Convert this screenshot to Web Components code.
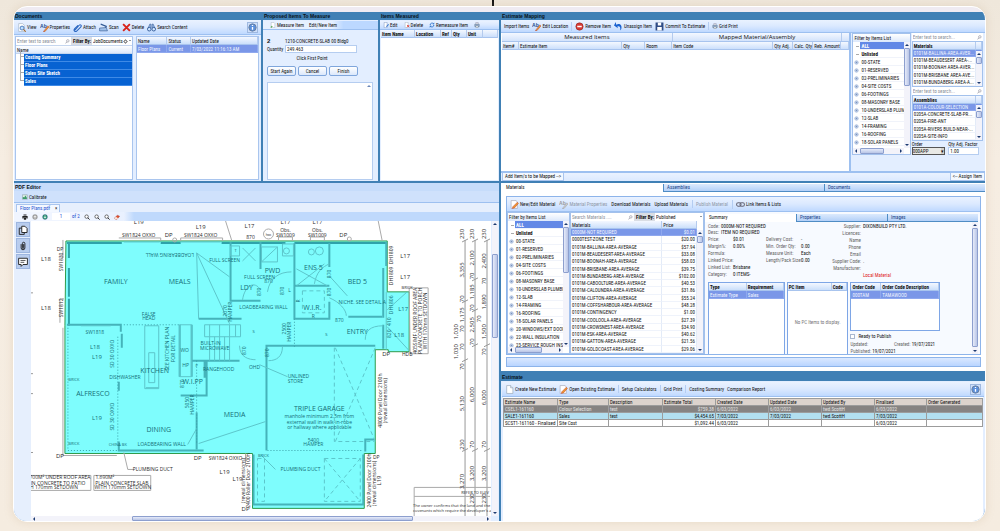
<!DOCTYPE html>
<html lang="en">
<head>
<meta charset="utf-8">
<title>Estimating workspace</title>
<style>
  body {
    margin: 0;
    height: 100vh;
    overflow: hidden;
    background: linear-gradient(#efe7db, #f6ede2 30%, #f5ece0);
    font: 5px/8px 'Liberation Sans Narrow', 'Roboto Condensed', Roboto, sans-serif;
    color: #111;
  }
</style>
</head>
<body>
<app-shell></app-shell>

<script>
const BASE = `
  *, *::before, *::after { box-sizing: border-box; }
  :host { display: block; min-width: 0; min-height: 0; box-sizing: border-box; }
  :host([hidden]) { display: none; }
  button, input, select { font: inherit; color: inherit; margin: 0; padding: 0; border: 0; background: none; border-radius: 0; min-width: 0; outline: 0; }
  button { cursor: pointer; }
`;

// ---------- icons ----------
const ICONS = {
  view: '<path d="M3 1h7l3 3v11H3z" fill="#fff" stroke="#9ab"/><circle cx="9" cy="9" r="3.5" fill="#bfe0ff" stroke="#3a6fb8" stroke-width="1.5"/><path d="M11.5 11.5l4 4" stroke="#a76b2c" stroke-width="2"/>',
  ab: '<text x="0" y="8" font-size="9" font-weight="bold" font-family="Liberation Sans" fill="#234b8c">Ab</text><path d="M7 14L14 5l2 2-7 8-3 1z" fill="#f0a030" stroke="#a33" stroke-width=".8"/>',
  abgray: '<text x="0" y="8" font-size="9" font-weight="bold" font-family="Liberation Sans" fill="#999">Ab</text><path d="M7 14L14 5l2 2-7 8-3 1z" fill="#ccc" stroke="#999" stroke-width=".8"/>',
  clip: '<path d="M3 13l8-9c2-2 5 0 3 3l-7 7c-3 3-7 0-4-4l6-6" fill="none" stroke="#2a66c0" stroke-width="1.8"/>',
  scan: '<path d="M3 2l10 4-3 6" fill="none" stroke="#345c96" stroke-width="2"/><path d="M1 9l12-1 2 6H1z" fill="#9fc0ea" stroke="#2d4f86"/>',
  del: '<path d="M2 2l12 12M14 2L2 14" stroke="#d8241c" stroke-width="3.4"/>',
  find: '<path d="M2 9l3-7h2v7M14 9l-3-7H9v7" fill="#9dbbe6" stroke="#27508f"/><circle cx="4" cy="11" r="3.2" fill="#cfe6ff" stroke="#27508f" stroke-width="1.5"/><circle cx="12" cy="11" r="3.2" fill="#cfe6ff" stroke="#27508f" stroke-width="1.5"/>',
  info: '<circle cx="8" cy="8" r="6.5" fill="#5b8fdc" stroke="#6b7f9c" stroke-width="1.6"/><path d="M8 7v5M8 3.5v2" stroke="#fff" stroke-width="2.4"/>',
  measure: '<path d="M3 1h7l3 3v11H3z" fill="#fff" stroke="#89a"/><path d="M1 14l4-4 2 2-3 3z" fill="#4aa34a"/>',
  editpage: '<path d="M3 1h8v14H3z" fill="#fff" stroke="#57a"/><path d="M8 12l6-7 2 2-6 6z" fill="#3a78d0"/>',
  delpage: '<path d="M3 1h8v14H3z" fill="#fff" stroke="#89a"/><path d="M8 8l6 6M14 8l-6 6" stroke="#e03020" stroke-width="2"/>',
  cycle: '<path d="M3 8a5 5 0 0 1 9-3M13 8a5 5 0 0 1-9 3" fill="none" stroke="#2a6fc8" stroke-width="2.4"/><path d="M9 6h5V1zM7 10H2v5z" fill="#2a6fc8"/>',
  print: '<path d="M5 1h6v5H5z" fill="#fff" stroke="#668"/><path d="M2 6h12v6H2z" fill="#9db4d8" stroke="#456"/><path d="M5 10h6v5H5z" fill="#fff" stroke="#456"/>',
  remove: '<circle cx="8" cy="8" r="6.5" fill="#d83a34" stroke="#8a2420"/><path d="M4 8h8" stroke="#fff" stroke-width="2.6"/>',
  undo: '<path d="M4 5c5-4 11 0 9 7-.6 2-2 3-2 3 1-6-1-8-5-7l1 3-7-5 3-6z" fill="#1a62d0"/>',
  save: '<path d="M1 1h14v14H1z" fill="#2f4c86"/><path d="M5 1h6v5H5zM4 9h8v6H4z" fill="#fff"/>',
  pencil: '<path d="M2 1h9l2 3v11H2z" fill="#fff" stroke="#99a"/><path d="M5 12l8-8 2 2-7 8-4 1z" fill="#ee9a30" stroke="#b33" stroke-width=".8"/>',
  blank: '<path d="M3 1h7l4 4v10H3z" fill="#fff" stroke="#89a"/><path d="M10 1v4h4" fill="#dde8f8" stroke="#89a"/>',
  link: '<rect x="1" y="5" width="8" height="6" rx="3" fill="none" stroke="#667" stroke-width="1.8"/><rect x="7" y="5" width="8" height="6" rx="3" fill="none" stroke="#667" stroke-width="1.8"/>',
  calibrate: '<path d="M1 2h13v12H1z" fill="#dff0e4" stroke="#678"/><path d="M2 13V7l4 2 3-5 4 6v3z" fill="#3f9a6a"/>',
  printer: '<path d="M4 1h8v3H4zM1 5h14v7h-3V9H4v3H1zM5 10h6v5H5z" fill="#222"/>',
  up: '<circle cx="8" cy="8" r="6.5" fill="#aaa" stroke="#777"/><path d="M8 12V5M5 8l3-3 3 3" fill="none" stroke="#fff" stroke-width="1.8"/>',
  down: '<circle cx="8" cy="8" r="6.5" fill="#2f9a74" stroke="#247"/><path d="M8 4v7M5 8l3 3 3-3" fill="none" stroke="#fff" stroke-width="1.8"/>',
  zoom: '<circle cx="7" cy="7" r="4.6" fill="#fff" stroke="#333" stroke-width="1.8"/><path d="M10 10l5 5" stroke="#333" stroke-width="2.6"/>',
  eraser: '<path d="M1 11l8-8 6 3-7 8H4z" fill="#e0502c" stroke="#933"/><path d="M1 11l4-4 6 4-3 3H4z" fill="#f7e6dc"/>',
  gear: '<circle cx="8" cy="8" r="4.4" fill="none" stroke="#444" stroke-width="2.4"/><path d="M8 1v14M1 8h14" stroke="#444" stroke-width="1.4"/><circle cx="8" cy="8" r="2.6" fill="#fff"/>',
  search: '<circle cx="9" cy="6" r="4" fill="none" stroke="#778" stroke-width="1.6"/><path d="M6 9l-4 5" stroke="#778" stroke-width="2"/>',
  pages: '<path d="M6 2h5l3.5 3.5V12H6z" fill="#fff" stroke="#222" stroke-width="1.5"/><path d="M6 5H2v10h8v-3" fill="none" stroke="#222" stroke-width="1.5"/>',
  attach: '<path d="M5 5v6a3 3 0 0 0 6 0V4a2 2 0 0 0-4 0v7a1 1 0 0 0 2 0V5" fill="none" stroke="#222" stroke-width="1.5"/>',
  note: '<path d="M1 2h14v10H8l-3 3v-3H1z" fill="#fff" stroke="#222" stroke-width="1.5"/><path d="M4 5.500h8M4 8.500h6" stroke="#222" stroke-width="1.2"/>',
  node: '<circle cx="8" cy="8" r="5.500" fill="#dbe7f9" stroke="#8aa2cc" stroke-width="2"/><path d="M5 8h6M8 5v6" stroke="#5b76a6" stroke-width="1.6"/>'
};

class UiIcon extends HTMLElement {
  connectedCallback() {
    this.attachShadow({ mode: 'open' });
    this.shadowRoot.innerHTML = `
      <style>
        :host { display: inline-block; flex: none; width: var(--icon, 9px); height: var(--icon, 9px); }
        svg { display: block; width: 100%; height: 100%; }
      </style>
      <svg viewBox="0 0 16 16" aria-hidden="true">${ICONS[this.getAttribute('name')] || ''}</svg>`;
  }
}

// ---------- toolbar ----------
class ToolBar extends HTMLElement {
  connectedCallback() {
    this.attachShadow({ mode: 'open' });
    this.shadowRoot.innerHTML = `
      <style>${BASE}
        :host {
          display: flex; align-items: center; flex: none; gap: 3px;
          height: 15px; padding: 0 3px; white-space: nowrap;
          background: linear-gradient(#eaf2ff, #dbe9ff 50%, #bfd9ff);
          border-bottom: 1px solid #9dc0f0;
        }
      </style>
      <slot></slot>`;
  }
}

class ToolItem extends HTMLElement {
  connectedCallback() {
    const icon = this.getAttribute('icon');
    this.attachShadow({ mode: 'open' });
    this.shadowRoot.innerHTML = `
      <style>${BASE}
        :host { display: block; flex: none; }
        :host([push]) { margin-left: auto; }
        :host([off]) { color: #8f98a8; }
        :host([split]) { border-left: 1px solid #b4cdf2; padding-left: 3px; }
        button { display: flex; align-items: center; gap: 1px; white-space: nowrap; line-height: 8px; }
        :host([boxed]) button { border: 1px solid #9fb9e0; background: #cfdffa; }
      </style>
      <button type="button" ${icon && !this.textContent ? `aria-label="${icon}"` : ''}>${icon ? `<ui-icon name="${icon}"></ui-icon>` : ''}<slot></slot></button>`;
  }
}

// ---------- pane ----------
class AppPane extends HTMLElement {
  connectedCallback() {
    this.attachShadow({ mode: 'open' });
    this.shadowRoot.innerHTML = `
      <style>${BASE}
        :host { display: flex; flex-direction: column; overflow: hidden; background: #e3eeff; }
        h2 {
          flex: none; margin: 0; height: 8px; padding-left: 1px;
          font: bold 5px/8px 'Liberation Sans', sans-serif;
          background: var(--bar, #4080b5); color: #061018; white-space: nowrap;
        }
      </style>
      <h2>${this.getAttribute('label')}</h2>
      <slot></slot>`;
  }
}

// ---------- scroll bars ----------
class ScrollTrack extends HTMLElement {
  connectedCallback() {
    this.attachShadow({ mode: 'open' });
    this.shadowRoot.innerHTML = `
      <style>${BASE}
        :host { display: flex; flex: none; flex-direction: column; width: 6px; background: #f3f3fa; }
        :host([across]) { flex-direction: row; width: auto; height: 6px; }
        i { flex: none; width: 6px; height: 6px; display: grid; place-items: center; }
        i::before { content: ''; border: 2px solid transparent; border-bottom-color: #1c3a70; border-top-width: 0; }
        i:last-child::before { transform: rotate(180deg); }
        :host([across]) i::before { transform: rotate(-90deg); }
        :host([across]) i:last-child::before { transform: rotate(90deg); }
        .lead { flex: var(--lead, 0) 0 0; }
        .rest { flex: var(--rest, 1) 0 0; }
        .thumb {
          flex: var(--thumb, 1) 0 0; border: 1px solid #8d9fce; border-radius: 1px;
          background: linear-gradient(90deg, #e6ebfa, #b9c5e6);
        }
        :host([across]) .thumb { background: linear-gradient(#e6ebfa, #b9c5e6); }
      </style>
      <i></i><span class="lead"></span><span class="thumb"></span><span class="rest"></span><i></i>`;
  }
}

// ---------- search row ----------
class SearchBox extends HTMLElement {
  connectedCallback() {
    this.attachShadow({ mode: 'open' });
    this.shadowRoot.innerHTML = `
      <style>${BASE}
        :host { display: flex; align-items: center; flex: none; height: 8px; background: #fff; --icon: 5px; padding-right: 1px; }
        input { flex: 1; height: 7px; padding-left: 1px; }
        input::placeholder { color: #8a8f99; opacity: 1; }
      </style>
      <input type="search" aria-label="Search" placeholder="${this.getAttribute('hint') || 'Enter text to search...'}">
      <ui-icon name="search"></ui-icon>`;
  }
}

class FilterSelect extends HTMLElement {
  connectedCallback() {
    this.attachShadow({ mode: 'open' });
    this.shadowRoot.innerHTML = `
      <style>${BASE}
        :host { display: flex; align-items: center; flex: none; height: 8px; background: #fff; }
        label { background: #d9dde4; padding: 0 1px 0 2px; font-weight: bold; white-space: nowrap; }
        select { flex: 1; appearance: none; height: 8px; padding-left: 1px; }
        span { border: 1px solid transparent; border-top-color: #234; margin: 0 1px; }
      </style>
      <label for="f">Filter By:</label>
      <select id="f"><option>${this.getAttribute('value')}</option></select><slot></slot><span></span>`;
  }
}

// ---------- category tree ----------
const CATEGORIES = ['00-STATE', '01-RESERVED', '02-PRELIMINARIES', '04-SITE COSTS', '06-FOOTINGS', '08-MASONRY BASE',
  '10-UNDERSLAB PLUMBIN', '12-SLAB', '14-FRAMING', '16-ROOFING', '18-SOLAR PANELS', '20-WINDOWS/EXT DOOR',
  '22-WALL INSULATION', '23-SERVICE ROUGH INS'];

class CategoryTree extends HTMLElement {
  connectedCallback() {
    const items = CATEGORIES.slice(0, this.getAttribute('count') || CATEGORIES.length);
    this.attachShadow({ mode: 'open' });
    this.shadowRoot.innerHTML = `
      <style>${BASE}
        :host { display: flex; flex-direction: column; border: 1px solid #a3c1ec; background: #fff; --icon: 5px; overflow: hidden; }
        h3 { flex: none; margin: 0; font: inherit; height: 8px; padding-left: 1px; background: linear-gradient(#fff, #dce8fb); white-space: nowrap; }
        .body { flex: 1; display: flex; min-height: 0; }
        ul { flex: 1; min-width: 0; margin: 0; padding: 0; list-style: none; overflow: hidden; }
        li { display: flex; align-items: center; gap: 1px; height: 8px; padding-left: 1px; white-space: nowrap; }
        li span { flex: 1; padding-left: 1px; overflow: hidden; border-bottom: 1px solid #f0f3fa; height: 8px; }
        li.top::before { content: ''; width: 5px; height: 1px; background: linear-gradient(90deg, transparent 50%, #aaa 50%); }
        li.top { font-weight: bold; }
        li.on span { background: #6288e6; color: #fff; }
        .v { --lead: 0; --thumb: 36; --rest: 55; }
        .h { --lead: 1; --thumb: 28; --rest: 17; margin-right: 6px; }
      </style>
      <h3>Filter by Items List</h3>
      <div class="body">
        <ul>
          <li class="top on"><span>ALL</span></li>
          <li class="top"><span>Unlisted</span></li>
          ${items.map(c => `<li><ui-icon name="node"></ui-icon><span>${c}</span></li>`).join('')}
        </ul>
        <scroll-track class="v"></scroll-track>
      </div>
      <scroll-track class="h" across></scroll-track>`;
  }
}

// ---------- grids ----------
// cols: [label, share of the width, alignment]
const AVG = '-AREA-AVERAGE';
const GRIDS = {
  files: { cols: [['Name', 31], ['Status', 24], ['Updated Date', 68]],
    rows: [['Floor Plans', 'Current', '7/03/2022 11:16:13 AM']], on: 0 },
  measured: { bold: true, cols: [['Item Name', 34], ['Location', 26], ['Ref', 11], ['Qty', 15], ['Unit', 16], ['', 15]], rows: [] },
  mapping: { cols: [['Item#', 17], ['Estimate Item', 103], ['Qty', 23], ['Room', 27], ['Item Code', 101], ['Qty Adj.', 20], ['Calc. Qty', 20], ['Reb. Amount', 28], ['', 8]], rows: [] },
  pickMaterials: { bold: true, cols: [['Materials', 64], ['', 6]],
    rows: ['0101M-BALLINA-AREA-AVER...', '0101M-BEAUDESERT AREA-...', '0101M-BOONAH AREA-AVER...', '0101M-BRISBANE AREA-AVE...', '0101M-BUNDABERG AREA-A...'].map(t => [t]), on: 0 },
  pickAssemblies: { bold: true, cols: [['Assemblies', 64], ['', 6]],
    rows: ['0101A-COLOUR-SELECTION', '0205A-CONCRETE-SLAB-PR...', '0205A-FIRE-ANT', '0205A-RIVERS BUILD-NEAR-...', '0205A-SITE-INFO'].map(t => [t]), on: 0 },
  materials: { cols: [['Materials', 92], ['Price', 35, 'end']], on: 0, rows: [
    ['0000M-NOT REQUIRED', '$0.01'], ['0000TEST-ZONE TEST', '$20.00'], ['0101M-BALLINA' + AVG, '$57.94'],
    ['0101M-BEAUDESERT' + AVG, '$33.08'], ['0101M-BOONAH' + AVG, '$58.03'], ['0101M-BRISBANE' + AVG, '$39.75'],
    ['0101M-BUNDABERG' + AVG, '$102.00'], ['0101M-CABOOLTURE' + AVG, '$40.53'], ['0101M-CALOUNDRA' + AVG, '$31.86'],
    ['0101M-CLIFTON' + AVG, '$55.24'], ['0101M-COFFSHARBOUR' + AVG, '$48.28'], ['0101M-CONTINGENCY', '$1.00'],
    ['0101M-COOLOOLA' + AVG, '$27.39'], ['0101M-CROWSNEST' + AVG, '$34.90'], ['0101M-ESK' + AVG, '$40.62'],
    ['0101M-GATTON' + AVG, '$21.56'], ['0101M-GOLDCOAST' + AVG, '$29.06']] },
  types: { bold: true, cols: [['Type', 39], ['Requirement', 38]], rows: [['Estimate Type', 'Sales']], on: 0 },
  pcItems: { bold: true, cols: [['PC Item', 45], ['Code', 16]], rows: [] },
  orders: { bold: true, cols: [['Order Code', 30], ['Order Code Description', 58]], rows: [['000TAM', 'TAMAWOOD']], on: 0 },
  estimates: { classic: true,
    cols: [['Estimate Name', 54], ['Type', 51], ['Description', 54], ['Estimate Total', 53, 'end'], ['Created Date', 53], ['Updated Date', 53], ['Updated By', 53], ['Finalised', 52], ['Order Generated', 56]],
    rows: [['CSEL1-161160', 'Colour Selection', 'test', '$759.38', '6/03/2022', '6/03/2022', 'twd.ScottH', '6/03/2022', ''],
      ['SALE1-161160', 'Sales', 'test', '$4,454.65', '7/03/2022', '7/03/2022', 'twd.ScottH', '7/03/2022', ''],
      ['SCST1-161160 - Finalised', 'Site Cost', '', '$1,092.44', '6/03/2022', '', '', '6/03/2022', '']] }
};

class DataGrid extends HTMLElement {
  connectedCallback() {
    const g = GRIDS[this.getAttribute('source')];
    const total = g.cols.reduce((n, c) => n + c[1], 0);
    this.attachShadow({ mode: 'open' });
    this.shadowRoot.innerHTML = `
      <style>${BASE}
        :host { background: #fff; overflow: hidden; }
        table { width: 100%; height: var(--table, auto); border-spacing: 0; table-layout: fixed; }
        th, td { height: var(--row, 8px); padding: 0 0 0 1px; line-height: 6px; text-align: start; font-weight: normal; white-space: nowrap; overflow: hidden; border-right: 1px solid #e3ebf8; }
        td { border-bottom: 1px solid #eff3fb; }
        th { height: 8px; border-right-color: #b4cbee; border-bottom: 1px solid #a8c4ee; background: linear-gradient(#f4f8ff, #cbdffb); }
        .bold th { font-weight: bold; }
        td.end { text-align: end; padding-right: 1px; }
        tr.on td { background: #7a97e8; color: #f2f6ff; border-color: #8fa8ee; }
        .classic { border-collapse: collapse; }
        .classic th, .classic td { border: 1px solid #9c9c9c; height: 7px; line-height: 6px; }
        .classic th { background: #dcd3cd; }
        .classic tbody tr:nth-child(1) td { background: #868382; color: #e4e4e4; }
        .classic tbody tr:nth-child(2) td { background: #b2dff0; }
      </style>
      <table class="${g.bold ? 'bold' : ''} ${g.classic ? 'classic' : ''}">
        <colgroup>${g.cols.map(c => `<col style="width:${(c[1] / total * 100).toFixed(2)}%">`).join('')}</colgroup>
        <thead><tr>${g.cols.map(c => `<th scope="col">${c[0]}</th>`).join('')}</tr></thead>
        <tbody>${g.rows.map((r, i) => `<tr${g.on === i ? ' class="on"' : ''}>${g.cols.map((c, j) => `<td class="${c[2] || ''}">${r[j] || ''}</td>`).join('')}</tr>`).join('')}</tbody>
      </table>
      <slot></slot>`;
  }
}

// ---------- documents ----------
class DocumentsPane extends HTMLElement {
  connectedCallback() {
    this.attachShadow({ mode: 'open' });
    this.shadowRoot.innerHTML = `
      <style>${BASE}
        :host { display: grid; }
        .cols { flex: 1; display: grid; grid-template-columns: 118fr 123fr; gap: 3px; padding: 1px 2px 1px 1px; min-height: 0; }
        .left, .right { border: 1px solid #a9c5ee; background: #fff; overflow: hidden; }
        .row { display: grid; grid-template-columns: 55fr 61fr; border-bottom: 1px solid #c5d6ef; }
        h3 { margin: 0; font: inherit; height: 8px; padding-left: 1px; background: linear-gradient(#fff, #dce8fb); border-bottom: 1px solid #c5d6ef; }
        ul { list-style: none; margin: 0 0 0 8px; padding: 0; font-weight: bold; }
        li { position: relative; height: 8px; padding-left: 1px; background: #0762d2; color: #fff; border-bottom: 1px solid #3f8ae6; line-height: 7px; }
        li::before { content: ''; position: absolute; left: -4px; bottom: 4px; width: 4px; height: 8px; border: solid #aaa; border-width: 0 0 1px 1px; }
      </style>
      <app-pane label="Documents">
        <tool-bar>
          <tool-item icon="view">View</tool-item>
          <tool-item icon="ab">Properties</tool-item>
          <tool-item icon="clip">Attach</tool-item>
          <tool-item icon="scan">Scan</tool-item>
          <tool-item icon="del">Delete</tool-item>
          <tool-item icon="find">Search Content</tool-item>
          <tool-item icon="info" push boxed></tool-item>
        </tool-bar>
        <div class="cols">
          <div class="left">
            <div class="row"><search-box></search-box><filter-select value="JobDocuments"><ui-icon name="gear" style="--icon:5px"></ui-icon></filter-select></div>
            <h3>Name</h3>
            <ul><li>Costing Summary</li><li>Floor Plans</li><li>Sales Site Sketch</li><li>Sales</li></ul>
          </div>
          <data-grid class="right" source="files"></data-grid>
        </div>
      </app-pane>`;
  }
}

// ---------- proposed items ----------
class ProposedPane extends HTMLElement {
  connectedCallback() {
    this.attachShadow({ mode: 'open' });
    this.shadowRoot.innerHTML = `
      <style>${BASE}
        :host { display: grid; }
        tool-bar { height: 9px; background: linear-gradient(90deg, #e6f0ff 60%, #bcd8ff 70%); --icon: 6px; margin-top: 1px; padding-left: 7px; gap: 5px; }
        form { flex: 1; display: flex; flex-direction: column; padding: 7px 4px 1px 4px; min-height: 0; }
        .fields { display: grid; grid-template-columns: 18px 72px; line-height: 8px; }
        b { font: bold 6px/8px 'Liberation Sans', sans-serif; }
        input { height: 8px; border: 1px solid #b5cdf0; background: #fff; padding-left: 1px; }
        p { margin: 1px 0 4px; width: 90px; text-align: center; }
        .buttons { display: grid; grid-template-columns: repeat(3, 29px); gap: 2px; }
        .buttons button { height: 10px; border: 1px solid #7fa6dc; border-radius: 2px; background: linear-gradient(#fff, #dbe8fb); }
        .log { flex: 1; display: flex; justify-content: end; margin: 6px 1px 0 0; border: 1px solid #b5cdf0; background: #fff; }
        .log i { width: 6px; height: 6px; display: grid; place-items: center; }
        .log i::before { content: ''; border: 2px solid transparent; border-bottom-color: #6b86b8; border-top-width: 0; }
      </style>
      <app-pane label="Proposed Items To Measure">
        <tool-bar>
          <tool-item icon="measure">Measure Item</tool-item>
          <tool-item>Edit/New Item</tool-item>
        </tool-bar>
        <form>
          <div class="fields">
            <b>2</b><span>1210-CONCRETE-SLAB 00 Bldg0</span>
            <label for="qty">Quantity</label><input id="qty" value="249.463">
          </div>
          <p>Click First Point</p>
          <div class="buttons"><button type="button">Start Again</button><button type="button">Cancel</button><button type="button">Finish</button></div>
          <div class="log"><i></i></div>
        </form>
      </app-pane>`;
  }
}

class MeasuredPane extends HTMLElement {
  connectedCallback() {
    this.attachShadow({ mode: 'open' });
    this.shadowRoot.innerHTML = `
      <style>${BASE}
        :host { display: grid; }
        tool-bar { height: 9px; --icon: 6px; margin-top: 1px; gap: 6px; }
        data-grid { flex: 1; margin: 0 1px 1px; }
      </style>
      <app-pane label="Items Measured">
        <tool-bar>
          <tool-item icon="editpage">Edit</tool-item>
          <tool-item icon="delpage">Delete</tool-item>
          <tool-item icon="cycle">Remeasure Item</tool-item>
          <tool-item icon="print"></tool-item>
        </tool-bar>
        <data-grid source="measured"></data-grid>
      </app-pane>`;
  }
}

// ---------- estimate mapping ----------
class MappingPane extends HTMLElement {
  connectedCallback() {
    this.attachShadow({ mode: 'open' });
    this.shadowRoot.innerHTML = `
      <style>${BASE}
        :host { display: grid; }
        tool-bar { height: 13px; gap: 3px; }
        .cols { flex: 1; display: grid; grid-template-columns: 350fr 58fr 72fr; padding-right: 2px; min-height: 0; }
        .cols > * { overflow: hidden; }
        .table { display: flex; flex-direction: column; background: #fff; border-right: 2px solid #9dc0f0; margin-right: 1px; padding-left: 1px; }
        .groups { flex: none; display: grid; grid-template-columns: 170fr 170fr 8fr; font: 6px/8px 'Open Sans', sans-serif; text-align: center; border-bottom: 1px solid #a8c4ee; background: linear-gradient(#f4f8ff, #d3e3fb); }
        .groups span + span { border-left: 1px solid #b4cbee; }
        data-grid { flex: none; }
        category-tree { margin: 0 0 16px; }
        .picks { padding-left: 1px; display: flex; flex-direction: column; }
        .pick { flex: none; display: grid; grid-template: 100% / 1fr 6px; height: 46px; border: 1px solid #a3c1ec; background: #fff; }
        .pick data-grid { grid-column: 1 / 3; grid-row: 1; --table: 100%; --row: 7px; }
        .pick scroll-track { grid-column: 2; grid-row: 1; margin-top: 9px; --thumb: 6; --rest: 19; }
        .order { display: grid; grid-template-columns: 34fr 31fr; gap: 0 3px; line-height: 6px; margin-right: 4px; }
        label { white-space: nowrap; }
        select { appearance: none; width: 100%; height: 8px; border: 1px solid #555; background: #e9e9e6; line-height: 6px; }
        .combo { display: block; position: relative; }
        .combo::after { content: '\\25BE'; position: absolute; right: 1px; top: 1px; background: #d4d0c8; }
        .order input { height: 8px; background: #fff; border: 1px solid #b5cdf0; padding-left: 1px; }
        footer { flex: none; display: flex; justify-content: space-between; height: 10px; border-top: 2px solid #9dc0f0; background: linear-gradient(#eaf2ff, #dbe9ff); padding-left: 1px; }
        footer button { padding: 0 2px; border: 1px solid #a9c5ee; border-top: 0; background: #f3f8ff; line-height: 7px; }
      </style>
      <app-pane label="Estimate Mapping">
        <tool-bar>
          <tool-item>Import Items</tool-item>
          <tool-item icon="ab">Edit Location</tool-item>
          <tool-item icon="remove" split>Remove Item</tool-item>
          <tool-item icon="undo">Unassign Item</tool-item>
          <tool-item icon="save">Commit To Estimate</tool-item>
          <tool-item icon="print" split style="--icon:6px">Grid Print</tool-item>
        </tool-bar>
        <div class="cols">
          <div class="table">
            <div class="groups"><span>Measured Items</span><span>Mapped Material/Assembly</span><span></span></div>
            <data-grid source="mapping"></data-grid>
          </div>
          <category-tree count="11"></category-tree>
          <div class="picks">
            <search-box></search-box>
            <div class="pick"><data-grid source="pickMaterials"></data-grid><scroll-track></scroll-track></div>
            <search-box></search-box>
            <div class="pick"><data-grid source="pickAssemblies"></data-grid><scroll-track></scroll-track></div>
            <div class="order">
              <label for="order">Order</label><label for="factor">Qty Adj. Factor</label>
              <span class="combo"><select id="order"><option>000APP</option></select></span><input id="factor" value="1.00">
            </div>
          </div>
        </div>
        <footer><button type="button">Add Item/s to be Mapped --&gt;</button><button type="button">&lt;-- Assign Item</button></footer>
      </app-pane>`;
  }
}

// ---------- tab strip ----------
class TabStrip extends HTMLElement {
  connectedCallback() {
    this.attachShadow({ mode: 'open' });
    this.shadowRoot.innerHTML = `
      <style>${BASE}
        :host { display: grid; flex: none; grid-auto-flow: column; grid-auto-columns: 1fr; height: 8px; }
        button { text-align: start; padding-left: 3px; line-height: 7px; color: #173f86; background: linear-gradient(#dceafd, #b3d0f8); border: 1px solid #4f8cc4; border-width: 0 0 1px 1px; }
        button:first-of-type { background: #fff; color: #111; border-color: #fff; }
      </style>
      ${this.getAttribute('tabs').split(',').map(t => `<button type="button" role="tab">${t}</button>`).join('')}`;
  }
}

// ---------- material detail ----------
class MaterialDetail extends HTMLElement {
  connectedCallback() {
    this.attachShadow({ mode: 'open' });
    this.shadowRoot.innerHTML = `
      <style>${BASE}
        :host { display: flex; flex-direction: column; background: #f7faff; border-left: 1px solid #a3c1ec; padding-top: 2px; overflow: hidden; }
        tab-strip { margin-right: 2px; }
        .body { flex: 1; display: flex; min-height: 0; }
        .page { flex: 1; padding: 1px 4px 0 3px; overflow: hidden; }
        .facts { display: grid; grid-template-columns: 59fr 76fr 129fr; height: 59px; }
        dl { margin: 0; display: grid; grid-template-columns: 25px 1fr; grid-auto-rows: 7px; line-height: 7px; align-content: start; white-space: nowrap; }
        dt { color: #666; }
        dd { margin: 0; }
        .tight { grid-template-columns: 13px 1fr; grid-auto-rows: 6px; margin-bottom: 1px; }
        .mid { grid-template-columns: 35px 1fr; padding-top: 13px; }
        .far { grid-template-columns: 20px 1fr; column-gap: 2px; }
        .far dt { text-align: end; justify-self: end; }
        .red { color: #e0201c; }
        .tables { display: grid; grid-template-columns: 77fr 62fr 90fr 26fr; gap: 2px; height: 74px; }
        .tables data-grid { border: 1px solid #7ea6e6; }
        .pc { text-align: center; color: #777; }
        .pc p { margin: 27px 0 0; }
        .tables .ord { height: 49px; }
        .foot label { display: flex; align-items: center; gap: 3px; height: 10px; }
        .foot input { appearance: none; width: 5px; height: 5px; border: 1px solid #a9b8d0; background: #fff; }
        .meta { display: flex; justify-content: space-between; line-height: 7px; color: #666; padding-right: 5px; }
        .meta b { font-weight: normal; color: #111; }
        scroll-track { --thumb: 120; --rest: 1; margin-right: 2px; }
      </style>
      <tab-strip tabs="Summary,Properties,Images"></tab-strip>
      <div class="body">
        <div class="page">
          <div class="facts">
            <div>
              <dl class="tight"><dt>Code:</dt><dd>0000M-NOT REQUIRED</dd><dt>Desc:</dt><dd>ITEM NO REQUIRED</dd></dl>
              <dl><dt>Price:</dt><dd>$0.01</dd><dt>Margin%:</dt><dd>0.00%</dd><dt>Formula:</dt><dd></dd><dt>Linked Price:</dt><dd></dd><dt>Linked List:</dt><dd>Brisbane</dd><dt>Category:</dt><dd>0 ITEMS-</dd></dl>
            </div>
            <dl class="mid"><dt>Delivery Cost:</dt><dd>-</dd><dt>Min. Order Qty:</dt><dd>0.00</dd><dt>Measure Unit:</dt><dd>Each</dd><dt>Length/Pack Size:</dt><dd>0.00</dd></dl>
            <dl class="far"><dt>Supplier:</dt><dd>DIXONBUILD PTY LTD.</dd><dt>Licences:</dt><dd></dd><dt>Name</dt><dd></dd><dt>Phone</dt><dd></dd><dt>Email</dt><dd></dd><dt>Supplier Code:</dt><dd>.</dd><dt>Manufacturer:</dt><dd></dd><dt></dt><dd class="red">Local Material</dd></dl>
          </div>
          <div class="tables">
            <data-grid source="types"></data-grid>
            <data-grid source="pcItems"><div class="pc"><p>No PC Items to display.</p></div></data-grid>
            <div>
              <data-grid class="ord" source="orders"></data-grid>
              <div class="foot">
                <label><input type="checkbox">Ready to Publish</label>
                <div class="meta"><span>Updated:</span><span>Created: <b>19/07/2021</b></span></div>
                <div class="meta"><span>Published: <b>19/07/2021</b></span></div>
              </div>
            </div>
          </div>
        </div>
        <scroll-track></scroll-track>
      </div>`;
  }
}

class MaterialsPane extends HTMLElement {
  connectedCallback() {
    this.attachShadow({ mode: 'open' });
    this.shadowRoot.innerHTML = `
      <style>${BASE}
        :host { display: flex; flex-direction: column; background: #fff; padding: 1px 0 4px 1px; overflow: hidden; }
        .frame { flex: 1; display: flex; flex-direction: column; margin: 4px 4px 2px; border: 1px solid #8db4ea; min-height: 0; }
        .cols { flex: 1; display: grid; grid-template: 100% / 63fr 134fr 276fr; min-height: 0; }
        .cols > * { min-height: 0; }
        .list { display: flex; flex-direction: column; border: 1px solid #a3c1ec; background: #fff; overflow: hidden; }
        .row { flex: none; display: grid; grid-template-columns: 64fr 70fr; }
        .body { flex: 1; display: flex; min-height: 0; }
        .body data-grid { flex: 1; --table: 100%; --row: 7px; }
        .body scroll-track { margin-top: 9px; --thumb: 5; --rest: 105; }
        .strip { flex: none; height: 10px; margin: 0 4px; border: 1px solid #8db4ea; background: linear-gradient(#dbe9ff, #b9d5ff); }
        tool-bar { gap: 4px; }
      </style>
      <tab-strip tabs="Materials,Assemblies,Documents"></tab-strip>
      <div class="frame">
        <tool-bar>
          <tool-item icon="pencil">New/Edit Material</tool-item>
          <tool-item icon="abgray" off>Material Properties</tool-item>
          <tool-item>Download Materials</tool-item>
          <tool-item>Upload Materials</tool-item>
          <tool-item off split>Publish Material</tool-item>
          <tool-item icon="link" split>Link Items &amp; Lists</tool-item>
        </tool-bar>
        <div class="cols">
          <category-tree></category-tree>
          <div class="list">
            <div class="row"><search-box hint="Search Materials ...."></search-box><filter-select value="Published"></filter-select></div>
            <div class="body"><data-grid source="materials"></data-grid><scroll-track></scroll-track></div>
          </div>
          <material-detail></material-detail>
        </div>
      </div>
      <div class="strip"></div>`;
  }
}

class EstimatePane extends HTMLElement {
  connectedCallback() {
    this.attachShadow({ mode: 'open' });
    this.shadowRoot.innerHTML = `
      <style>${BASE}
        :host { display: grid; }
        tool-bar { margin: 1px 1px 0; gap: 3px; }
        .area { flex: 1; margin: 0 2px; padding-top: 1px; background: #fff; }
      </style>
      <app-pane label="Estimate">
        <tool-bar>
          <tool-item icon="blank">Create New Estimate</tool-item>
          <tool-item icon="pencil">Open Existing Estimate</tool-item>
          <tool-item split>Setup Calculators</tool-item>
          <tool-item split>Grid Print</tool-item>
          <tool-item split>Costing Summary</tool-item>
          <tool-item>Comparison Report</tool-item>
          <tool-item icon="info" push boxed></tool-item>
        </tool-bar>
        <div class="area"><data-grid source="estimates"></data-grid></div>
      </app-pane>`;
  }
}

// ---------- floor plan ----------
// labels: [text, centre x, baseline y, size, turn]
const ROOMS = [
  ['FAMILY', 116, 284, 7], ['MEALS', 180, 284, 7], ['KITCHEN', 155, 373, 7], ['ALFRESCO', 93, 396, 7],
  ['DINING', 159, 432, 7], ['MEDIA', 235, 417, 7], ['ENTRY', 358, 334, 7], ['BED 5', 358, 284, 7],
  ['ENS 5', 314, 270, 7], ['PWD', 273, 273, 7], ['LDY', 247, 290, 7], ['W.I.R.', 313, 310, 7],
  ['W.I.PP', 193, 384, 7], ['TRIPLE GARAGE', 320, 411, 7],
  ['manhole minimum 2.5m from', 320, 418, 5], ['external wall in walk-in-robe', 320, 424, 5], ['or hallway where applicable', 320, 429, 5],
  ['LOADBEARING WALL', 264, 309, 5], ['LOADBEARING WALL', 170, 253, 5, 180], ['LOADBEARING WALL', 162, 447, 5],
  ['FULL SCREEN', 225, 262, 5], ['FULL SCREEN', 260, 279, 5], ['BUILT-IN', 211, 345, 5], ['MICROWAVE', 215, 350, 5],
  ['RANGEHOOD', 219, 371, 5], ['DISHWASHER', 125, 379, 5], ['UNLINED', 299, 378, 5], ['STORE', 296, 383, 5],
  ['5400', 314, 442, 5], ['HAMPER', 314, 447, 5], ['PLUMBING DUCT', 301, 472, 5], ['NICHE. SEE DETAIL A', 363, 304, 5],
  ['SW1818', 95, 334, 5], ['L18', 95, 349, 6], ['L19', 97, 359, 6], ['L19', 97, 420, 6], ['FALSE', 149, 316, 5], ['HEAD', 149, 320, 5],
  ['WO', 185, 352, 5], ['HP', 186, 367, 5], ['P', 197, 367, 4], ['T', 236, 252, 4], ['L17', 404, 311, 6], ['L18', 400, 337, 6],
  ['BRICK', 74, 381, 4], ['BRICK', 74, 445, 4], ['CHINA BK', 118, 446, 4], ['BRICK', 264, 458, 4],
  ['870', 269, 283, 5], ['870', 340, 322, 5], ['870', 262, 292, 5, -90], ['870', 332, 274, 5, -90], ['870', 332, 292, 5, -90],
  ['870', 270, 353, 5, -90], ['870', 184, 384, 5, -90], ['870', 285, 291, 5, -90], ['R', 314, 318, 5], ['R', 301, 301, 5, -90],
  ['2500', 287, 329, 5, -90], ['HAMPER', 292, 332, 5, -90], ['2070', 227, 311, 5, -90], ['HAMPER', 232, 312, 5, -90],
  ['5050', 189, 403, 5, -90], ['HAMPER', 194, 405, 5, -90], ['SD 30 OXXO', 114, 354, 5, -90], ['SD 30 OXXO', 114, 417, 5, -90],
  ['SEE KITCHEN PLAN', 169, 349, 5, -90], ['FOR DETAIL', 175, 349, 5, -90], ['DH1806', 394, 305, 5, -90],
  ['820', 392, 334, 5, -90], ['410', 392, 322, 5, -90], ['870', 246, 351, 5, -90], ['OHD', 255, 369, 5], ['L', 290, 292, 5], ['S', 327, 336, 4], ['S', 254, 333, 4]
];
const OUTSIDE = [
  ['L18', 46, 261, 6], ['L18', 46, 310, 6], ['L19', 139, 224, 6], ['SW1824 OXXO', 139, 237, 5], ['DP', 169, 237, 6], ['SW1824 OXXO', 201, 237, 5],
  ['L19', 201, 229, 6], ['L17', 250, 228, 6], ['870', 251, 239, 5], ['L17', 286, 224, 6], ['L17', 318, 224, 6],
  ['Obs.', 286, 232, 5], ['SW1009', 286, 237, 5], ['Obs.', 318, 232, 5], ['SW1009', 318, 237, 5], ['DP', 344, 237, 6], ['hws', 269, 236, 3],
  ['L17', 406, 258, 6], ['L17', 406, 279, 6], ['DH1809', 394, 255, 5, -90], ['DH1809', 394, 276, 5, -90],
  ['SW1830', 63, 262, 5, -90], ['SW1812', 63, 308, 5, -90], ['DP', 60, 251, 5], ['DP', 60, 459, 6], ['DP', 198, 461, 6],
  ['SW1824 OXXO', 226, 461, 5], ['L19', 225, 475, 6], ['L19', 238, 482, 6], ['PLUMBING DUCT', 153, 472, 5],
  ['DP', 387, 356, 6], ['HDB', 408, 356, 5], ['BRICK', 408, 289, 4], ['DP', 246, 512, 6], ['DP', 377, 460, 5], ['L19', 382, 481, 6, -90],
  ['405SIMF UNDER ROOF AREA', 418, 321, 5, -90], ['PLAIN CONCRETE TO PORCH', 423, 321, 5, -90], ['WITH 170mm SETDOWN', 428, 321, 5, -90],
  ['4800 Panel Door 2100h', 383, 401, 5, -90], ['(reveal dimensions)', 388, 401, 5, -90],
  ['2400 Panel Door 2100h', 372, 481, 5, -90], ['(reveal dimensions)', 377, 484, 5, -90],
  ['2400 Roller Door 2100h', 250, 481, 5, -90], ['(reveal dimensions)', 245, 481, 5, -90],
  ['700M² UNDER ROOF AREA', 60, 480, 5], ['IN CONCRETE TO PATIO', 58, 486, 5], ['H 170mm SETDOWN', 54, 490, 5],
  ['1.690M²', 105, 480, 5], ['PLAIN CONCRETE SLAB', 122, 486, 5], ['WITH 170mm SETDOWN', 123, 490, 5],
  ['230', 465, 234, 6, -90], ['3,355', 465, 270, 6, -90], ['70', 465, 299, 6, -90], ['1,175', 465, 315, 6, -90], ['1,030', 459, 332, 6, -90],
  ['70', 465, 329, 6, -90], ['70', 465, 347, 6, -90], ['1,030', 459, 352, 6, -90], ['70', 465, 367, 6, -90], ['5,130', 465, 404, 6, -90],
  ['230', 465, 445, 6, -90], ['3,270', 465, 482, 6, -90],
  ['230', 475, 234, 6, -90], ['2,100', 475, 258, 6, -90], ['70', 475, 276, 6, -90], ['1,185', 475, 292, 6, -90], ['70', 475, 308, 6, -90],
  ['2,505', 475, 325, 6, -90], ['70', 475, 342, 6, -90], ['6,000', 475, 395, 6, -90], ['70', 475, 445, 6, -90], ['3,200', 475, 474, 6, -90], ['230', 475, 499, 6, -90],
  ['230', 487, 234, 6, -90], ['2,400', 487, 261, 6, -90], ['70', 487, 281, 6, -90], ['1,890', 487, 302, 6, -90], ['70', 482, 319, 6, -90],
  ['1,500', 487, 332, 6, -90], ['70', 487, 352, 6, -90], ['6,000', 487, 398, 6, -90], ['70', 487, 445, 6, -90], ['3,200', 487, 474, 6, -90], ['230', 487, 499, 6, -90],
  ['REFER TO ELEV', 476, 495, 4], ['The owner confirms that the land and the c', 454, 508, 4], ['covenants which require the developer\'s ar', 454, 513, 4]
];
const labels = list => list.map(([t, x, y, s, r]) =>
  `<text x="${x}" y="${y}" font-size="${s}"${r ? ` transform="rotate(${r} ${x} ${y})"` : ''}>${t}</text>`).join('');

class FloorPlan extends HTMLElement {
  connectedCallback() {
    this.attachShadow({ mode: 'open' });
    this.shadowRoot.innerHTML = `
      <style>${BASE}
        :host { background: #fff; overflow: hidden; }
        svg { display: block; width: 100%; height: 100%; font-family: 'Open Sans', sans-serif; text-anchor: middle; }
        path, circle { fill: none; stroke: #aaa; stroke-width: 1; }
        .slab { fill: #7efdfd; stroke: #2f9a4a; }
        .wall { stroke: #45b3ba; stroke-width: 2; }
        .thin { stroke: #5cc6cb; }
        .dash { stroke: #5cc6cb; stroke-dasharray: 4 3; }
        .dots { stroke: #3aa2aa; stroke-dasharray: 1 2; }
        .ext { stroke: #2ea3aa; stroke-width: 2; }
        .dim { stroke: #999; }
        .rooms { fill: #156f78; }
        .outside { fill: #2a2a2a; }
      </style>
      <svg viewBox="31 221 461 296" preserveAspectRatio="xMinYMin slice" role="img" aria-label="Floor plan">
        <path class="slab" d="M66 241H388V292H410V352H389V350H376V454H365V509H253V454H65V326z"/>
        <path class="ext" d="M69 243v15M69 268v29M69 299v27M67 243h55M161 243h20M222 243h64M295 243h92"/>
        <path class="wall" d="M67 325h54v7M387 242v24M384 268v50M384 325v24"/>
        <path class="wall" d="M231 242v59h30M261 242v27M295 243v76h35v-17M330 243v24M295 286h35M349 317h34M266 346h110M267 347v104M199 319h43M192 325v52M180 325v52M205 378v-17M192 361h48M181 396h26v-34M197 413v37"/>
        <path class="wall" d="M122 334v14M119 382v9M119 442v9h85M254 455v50h110v-50M375 440h-9v12"/>
        <path class="thin" d="M124 242h36M181 242h40M81 326h30M145 326h14v63h-14zM149 353h6v30h-6zM146 388h13M180 325h12v52h-12zM205 325h36v12h-36zM210 325v36M215 337v24M220 325v36M225 337v24M230 325v36M236 325v12M197 253l33 71M197 253l33 24M197 253l2 66"/>
        <path class="thin" d="M231 246h9v10h-9zM243 248l13 13M256 248l-13 13M262 247h16v15h-16zM262 262l16-15M283 244h11v12h-11zM297 269l31 17M297 286l28-22M330 276l18 20M243 300c2-14 12-20 18-10M268 292c2-14 12-20 24-20M315 284c2-12 8-17 15-20M330 298c10 4 17 12 17 18M384 326c-14 0-18 6-18 14M387 292v58M388 327l22 24M388 310l20-18M240 346c0 12 10 14 16 14M283 347c0 10-6 14-14 14M188 445l9-16M199 444l67-22M288 377l-28-12M276 470l-14-14"/>
        <circle class="thin" cx="287" cy="251" r="3"/><circle class="thin" cx="320" cy="251" r="4"/><circle class="thin" cx="312" cy="252" r="3"/>
        <path class="dash" d="M335 348v94h40M336 348l40 94M376 348l-40 94M325 459h36v43h-36zM325 459l36 43M361 459l-36 43M258 459h7v43h-7zM303 291h22v22h-22z"/>
        <path class="dots" d="M68 328v122M68 451h50M124 325h56M268 451h96M295 319v28M197 361v84M118 337v108"/>
        <path d="M63 240v18h-2M64 299h-4v24M119 238h42v3M181 241v-3h42v3M279 241v-4h14v4M311 241v-4h14v4M226 221l6 19M379 221l4 20M63 328v128h54M124 453l4 17h6M246 454v12M410 288h19v66h-18z"/>
        <circle cx="269" cy="234" r="5"/><circle cx="350" cy="239" r="2"/><circle cx="175" cy="240" r="2"/>
        <path class="dim" d="M466 240v277M476 240v277M488 240v277"/>
        <path class="dim" d="M463 242l6-3M473 242l6-3M485 242l6-3M463 303l6-3M473 281l6-3M473 312l6-3M463 362l6-3M473 347l6-3M485 347l6-3M463 452l6-3M473 452l6-3M485 452l6-3M31 293h2M31 374h2M31 394h2M31 453h2" />
        <path d="M31 476h60v15H31M94 476h57v15H94zM415 517v-29h80M415 497h76"/>
        <g class="rooms">${labels(ROOMS)}</g>
        <g class="outside">${labels(OUTSIDE)}</g>
      </svg>`;
  }
}

class PdfPane extends HTMLElement {
  connectedCallback() {
    this.attachShadow({ mode: 'open' });
    this.shadowRoot.innerHTML = `
      <style>${BASE}
        :host { display: grid; }
        app-pane { --bar: #c6dcfb; }
        .cal { height: 12px; background: #cfe1fc; --icon: 6px; padding-left: 8px; }
        .tabs { flex: none; display: flex; height: 9px; padding: 1px 0 0 2px; background: #e6effd; }
        .tab { display: flex; gap: 5px; padding: 0 2px 0 3px; border: 1px solid #a9c5ee; border-bottom: 0; background: #f4f8ff; line-height: 7px; }
        .tab a { color: #1c4fd0; text-decoration: none; }
        .pages { height: 9px; gap: 4px; padding-left: 8px; --icon: 6px; background: linear-gradient(90deg, #f0f5ff 50px, #e9f1ff 110px, #bfd9fc 120px); border: 0; }
        .pages input { width: 18px; height: 7px; text-align: center; background: #fff; border: 0; }
        .pages label { display: flex; gap: 2px; line-height: 7px; color: #1c4fd0; }
        .body { flex: 1; display: grid; grid-template-columns: 17px 1fr 8px; grid-template-rows: 1fr 5px; min-height: 0; }
        nav { grid-row: 1 / 3; background: #e6effd; display: flex; flex-direction: column; gap: 1px; padding: 1px 1px 0 2px; --icon: 10px; }
        nav button { height: 15px; width: 14px; display: grid; place-items: center; background: #b9cdee; border: 1px solid #9db6e0; }
        .v { margin: 0 1px; --lead: 9; --thumb: 28; --rest: 58; }
        .h { height: 5px; --lead: 21; --thumb: 62; --rest: 16; }
      </style>
      <app-pane label="PDF Editor">
        <tool-bar class="cal"><tool-item icon="calibrate">Calibrate</tool-item></tool-bar>
        <div class="tabs"><span class="tab"><a href="#">Floor Plans.pdf</a><span>×</span></span></div>
        <tool-bar class="pages">
          <tool-item icon="printer"></tool-item><tool-item icon="up"></tool-item><tool-item icon="down"></tool-item>
          <label><input aria-label="Page" value="1">of 2</label>
          <tool-item icon="zoom"></tool-item><tool-item icon="zoom"></tool-item><tool-item icon="zoom"></tool-item><tool-item icon="eraser"></tool-item>
        </tool-bar>
        <div class="body">
          <nav>
            <button type="button" aria-label="Pages"><ui-icon name="pages"></ui-icon></button>
            <button type="button" aria-label="Attachments"><ui-icon name="attach"></ui-icon></button>
            <button type="button" aria-label="Comments"><ui-icon name="note"></ui-icon></button>
          </nav>
          <floor-plan></floor-plan>
          <scroll-track class="v"></scroll-track>
          <scroll-track class="h" across></scroll-track>
        </div>
      </app-pane>`;
  }
}

// ---------- shell ----------
class AppShell extends HTMLElement {
  connectedCallback() {
    this.attachShadow({ mode: 'open' });
    this.shadowRoot.innerHTML = `
      <style>${BASE}
        :host { display: flex; flex-direction: column; height: 100%; padding: 0 14px 9px 13px; }
        .mark { flex: none; align-self: center; width: 2px; height: 6px; margin-right: 13px; background: #111; }
        .card {
          flex: 1; display: flex; flex-direction: column; min-height: 0; overflow: hidden;
          border: 1px solid #fff; border-radius: 14px; background: #efebf2;
          box-shadow: 0 0 8px rgba(190, 160, 120, .25);
        }
        .hint { flex: none; height: 5px; }
        main {
          flex: 1; min-height: 0; display: grid; gap: 2px; background: #4080b5;
          grid-template: 169fr 188fr 148fr / 485fr 484fr;
          grid-template-areas: 'docs map' 'pdf mats' 'pdf est';
        }
        .top { grid-area: docs; display: grid; grid-template-columns: 247fr 115fr 119fr; gap: 2px; min-height: 0; min-width: 0; }
        mapping-pane { grid-area: map; }
        pdf-pane { grid-area: pdf; }
        materials-pane { grid-area: mats; }
        estimate-pane { grid-area: est; }
      </style>
      <div class="mark"></div>
      <div class="card">
        <div class="hint"></div>
        <main>
          <div class="top"><documents-pane></documents-pane><proposed-pane></proposed-pane><measured-pane></measured-pane></div>
          <mapping-pane></mapping-pane>
          <pdf-pane></pdf-pane>
          <materials-pane></materials-pane>
          <estimate-pane></estimate-pane>
        </main>
      </div>`;
  }
}

customElements.define('ui-icon', UiIcon);
customElements.define('tool-bar', ToolBar);
customElements.define('tool-item', ToolItem);
customElements.define('app-pane', AppPane);
customElements.define('scroll-track', ScrollTrack);
customElements.define('search-box', SearchBox);
customElements.define('filter-select', FilterSelect);
customElements.define('category-tree', CategoryTree);
customElements.define('data-grid', DataGrid);
customElements.define('tab-strip', TabStrip);
customElements.define('documents-pane', DocumentsPane);
customElements.define('proposed-pane', ProposedPane);
customElements.define('measured-pane', MeasuredPane);
customElements.define('mapping-pane', MappingPane);
customElements.define('material-detail', MaterialDetail);
customElements.define('materials-pane', MaterialsPane);
customElements.define('estimate-pane', EstimatePane);
customElements.define('floor-plan', FloorPlan);
customElements.define('pdf-pane', PdfPane);
customElements.define('app-shell', AppShell);
</script>
</body>
</html>
